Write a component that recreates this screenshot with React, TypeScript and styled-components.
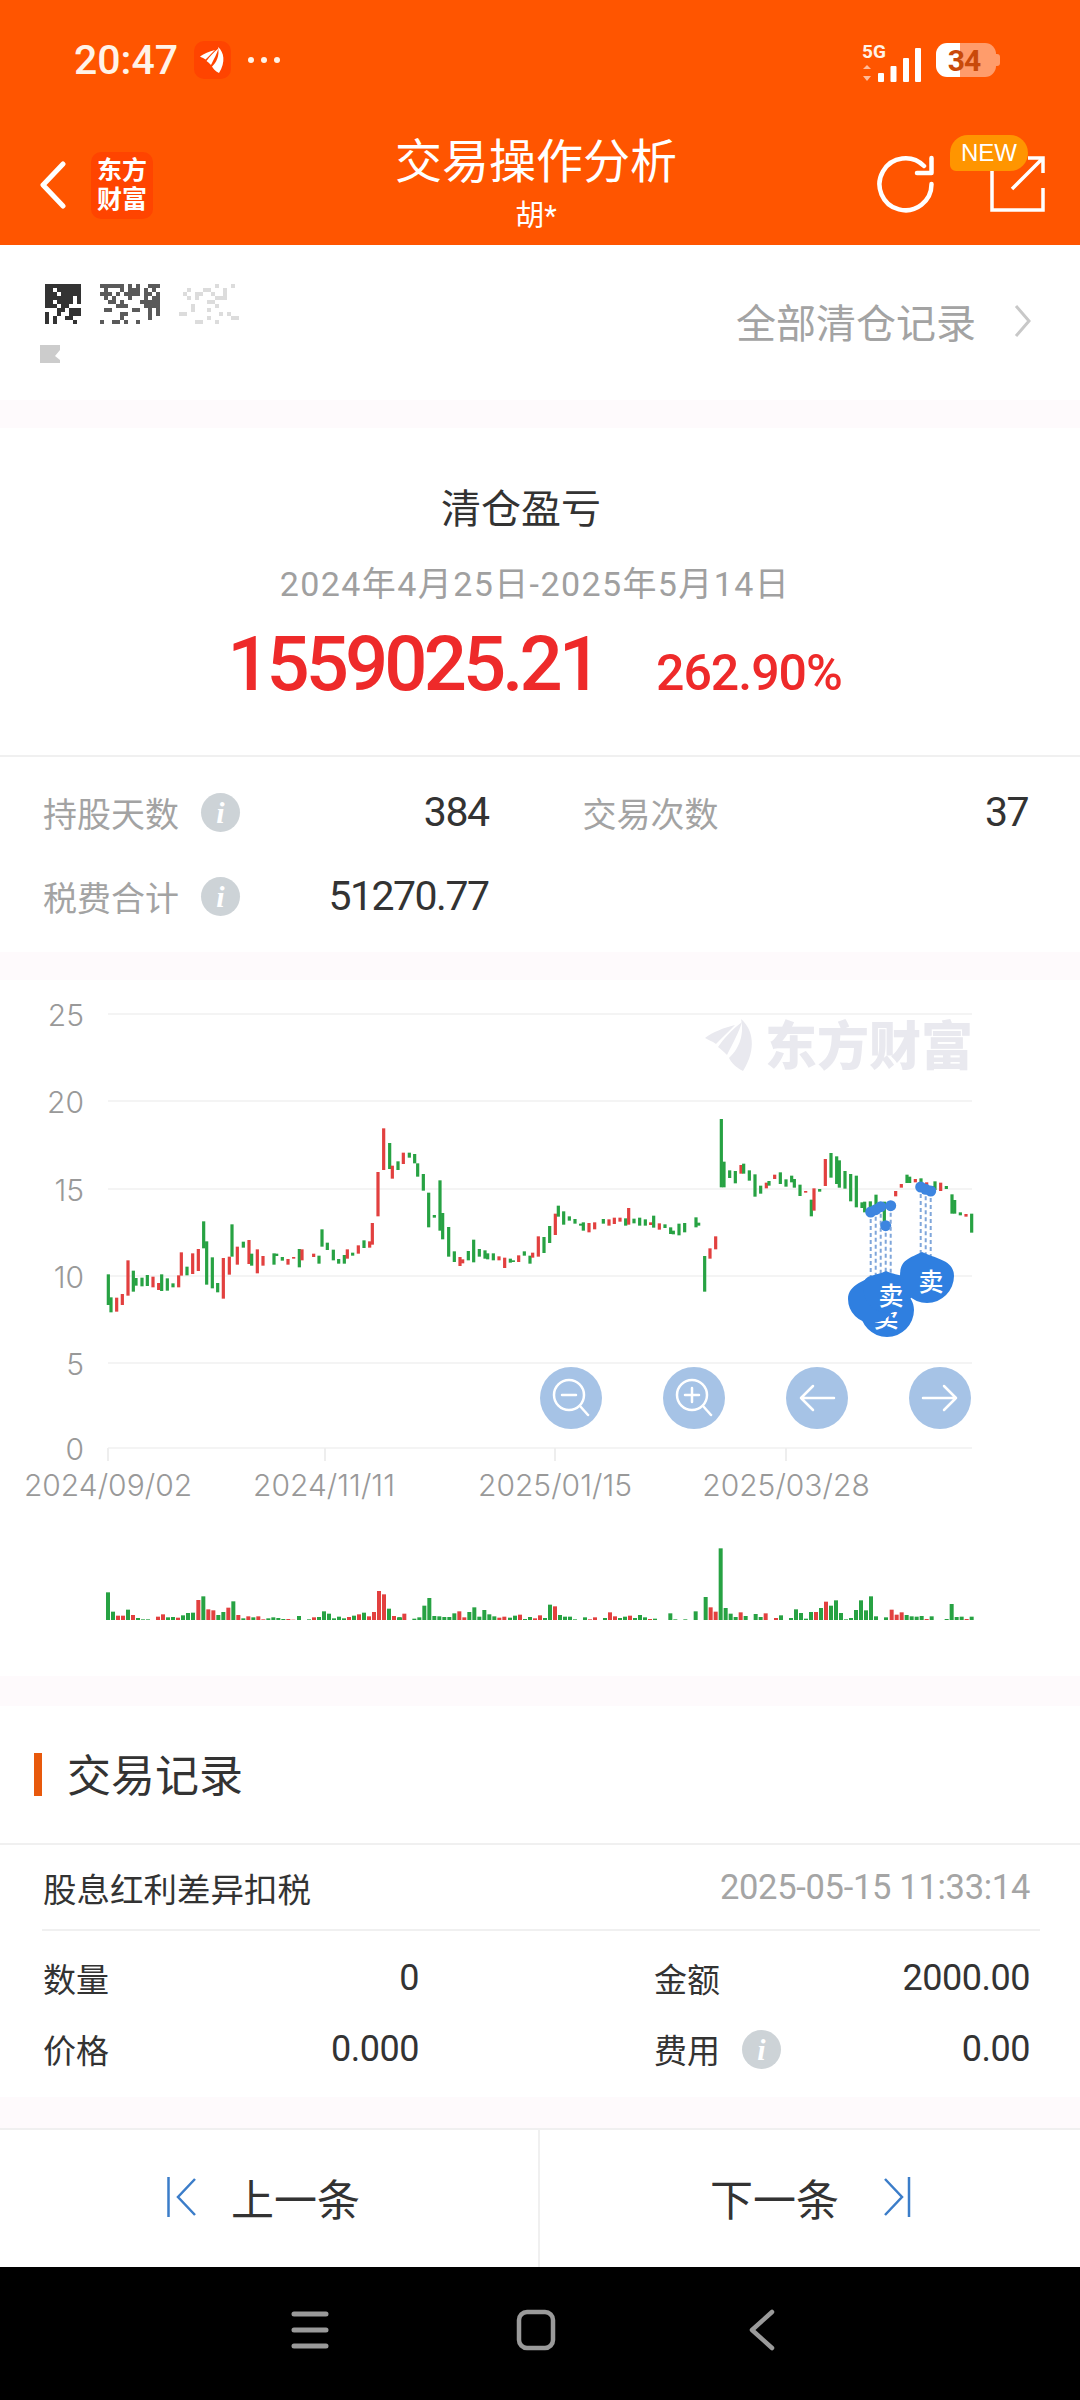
import React from 'react';
import styled, { createGlobalStyle } from 'styled-components';

const GlobalStyle = createGlobalStyle`
  html, body { margin: 0; padding: 0; background: #fff; }
  * { box-sizing: border-box; }
`;

const CJK = `Roboto, "Noto Sans CJK SC", sans-serif`;

const Page = styled.div`
  width: 1080px;
  height: 2400px;
  overflow: hidden;
  display: flex;
  flex-direction: column;
  background: #fff;
  font-family: ${CJK};
  color: #333;
`;

const Header = styled.header`
  height: 245px;
  background: #ff5500;
  color: #fff;
  display: flex;
  flex-direction: column;
`;

const StatusBar = styled.div`
  height: 120px;
  display: flex;
  align-items: center;
  padding: 0 84px 0 74px;
`;

const Clock = styled.span`
  font-size: 41px;
  font-weight: 500;
  color: #fff3e8;
`;

const AppMark = styled.span`
  width: 37px;
  height: 38px;
  margin-left: 16px;
  border-radius: 10px;
  background: #ff4400;
  display: flex;
  align-items: center;
  justify-content: center;
`;

const Dots = styled.span`
  display: flex;
  gap: 7px;
  margin-left: 17px;
`;

const Dot = styled.i`
  width: 6px;
  height: 6px;
  border-radius: 50%;
  background: #fff3e8;
`;

const StatusRight = styled.div`
  margin-left: auto;
  display: flex;
  align-items: center;
  gap: 14px;
`;

const Battery = styled.div`
  position: relative;
  width: 60px;
  height: 34px;
  border-radius: 11px;
  background: linear-gradient(90deg, #fff 0 40%, rgba(255, 255, 255, 0.42) 40%);
  color: #c94a0a;
  font-size: 30px;
  font-weight: 700;
  letter-spacing: -1px;
  display: flex;
  align-items: center;
  justify-content: center;
  padding-right: 4px;
  &::after {
    content: '';
    position: absolute;
    right: -4px;
    top: 11px;
    width: 4px;
    height: 12px;
    border-radius: 0 3px 3px 0;
    background: rgba(255, 255, 255, 0.42);
  }
`;

const NavBar = styled.div`
  height: 125px;
  display: grid;
  grid-template-columns: 1fr auto 1fr;
  padding: 0 35px 0 27px;
`;

const NavLeft = styled.div`
  display: flex;
  align-items: center;
  margin-top: 5px;
  margin-left: 13px;
  gap: 25px;
`;

const BrandTile = styled.span`
  width: 62px;
  height: 67px;
  border-radius: 10px;
  background: #ff4400;
  font-size: 25px;
  line-height: 29px;
  font-weight: 700;
  text-align: center;
  display: flex;
  align-items: center;
  justify-content: center;
`;

const NavTitle = styled.div`
  padding-top: 17px;
  text-align: center;
`;

const TitleText = styled.div`
  font-size: 47px;
  line-height: 50px;
  font-weight: 400;
`;

const SubTitle = styled.div`
  margin-top: 11px;
  font-size: 29px;
  line-height: 36px;
`;

const NavRight = styled.div`
  position: relative;
  display: flex;
  align-items: center;
  justify-content: flex-end;
  gap: 55px;
  margin-top: 3px;
`;

const NewBadge = styled.span`
  position: absolute;
  right: 17px;
  top: 12px;
  width: 78px;
  height: 36px;
  border-radius: 18px 18px 18px 6px;
  background: #ff9500;
  font-family: "Liberation Sans", sans-serif;
  font-size: 24px;
  line-height: 36px;
  text-align: center;
`;

const AccountRow = styled.section`
  height: 155px;
  display: flex;
  align-items: center;
  justify-content: space-between;
  padding: 0 49px 4px 40px;
`;

const AllLink = styled.div`
  display: flex;
  align-items: center;
  gap: 38px;
  font-size: 40px;
  color: #a3a3a3;
`;

const Strip = styled.div<{ $h: number }>`
  height: ${p => p.$h}px;
  background: #fefafc;
`;

const Summary = styled.section`
  height: 329px;
  border-bottom: 2px solid #f0f0f0;
  display: flex;
  flex-direction: column;
  align-items: center;
  padding-top: 57px;
`;

const SummaryTitle = styled.div`
  font-size: 40px;
  line-height: 50px;
  color: #333;
  margin-right: 38px;
`;

const DateRange = styled.div`
  margin-top: 29px;
  font-size: 34px;
  letter-spacing: 1.4px;
  line-height: 40px;
  color: #a0a0a0;
  margin-right: 10px;
`;

const Profit = styled.div`
  margin-top: 20px;
  display: flex;
  align-items: baseline;
  gap: 58px;
  color: #ee2a2a;
  margin-right: 11px;
  line-height: 80px;
`;

const ProfitAmount = styled.span`
  font-size: 76px;
  font-weight: 500;
  letter-spacing: -3.9px;
`;

const ProfitRate = styled.span`
  font-size: 50px;
  font-weight: 500;
  letter-spacing: -1px;
`;

const Stats = styled.section`
  height: 195px;
  display: grid;
  grid-template-columns: 1fr 1fr;
  grid-auto-rows: 40px;
  gap: 44px 94px;
  padding: 35px 52px 0 43px;
`;

const StatCell = styled.div`
  display: flex;
  align-items: center;
`;

const StatLabel = styled.span`
  font-size: 34px;
  color: #a3a3a3;
`;

const InfoBadge = styled.span<{ $gap: number }>`
  width: 39px;
  height: 39px;
  margin-left: ${p => p.$gap}px;
  border-radius: 50%;
  background: #cdd3d7;
  color: #fff;
  font-family: "Liberation Serif", serif;
  font-style: italic;
  font-weight: 700;
  font-size: 30px;
  line-height: 39px;
  text-align: center;
`;

const StatValue = styled.span`
  margin-left: auto;
  font-size: 41px;
  letter-spacing: -1.5px;
  color: #333;
`;

const ChartSection = styled.section`
  position: relative;
  height: 696px;
`;

const ChartSvg = styled.svg`
  display: block;
`;

const AxisText = styled.text`
  font-family: Inter, sans-serif;
  font-weight: 300;
  font-size: 30px;
  fill: #999;
`;

const Watermark = styled.text`
  font-family: "Noto Sans CJK SC", sans-serif;
  font-weight: 900;
  font-size: 52px;
  fill: #e9e9ef;
`;

const PinText = styled.text`
  font-family: "Noto Sans CJK SC", sans-serif;
  font-size: 25px;
  font-weight: 500;
  fill: #fff;
  text-anchor: middle;
`;

const ChartTools = styled.div`
  position: absolute;
  left: 540px;
  top: 387px;
  display: flex;
  gap: 61px;
`;

const ToolButton = styled.button`
  width: 62px;
  height: 62px;
  padding: 0;
  border: 0;
  border-radius: 50%;
  background: #a6c3e6;
  display: flex;
  align-items: center;
  justify-content: center;
`;

const Records = styled.section`
  height: 391px;
  display: flex;
  flex-direction: column;
`;

const RecordsHead = styled.div`
  height: 139px;
  border-bottom: 2px solid #f0f0f0;
  display: flex;
  align-items: center;
  padding: 0 0 4px 34px;
  font-size: 44px;
  color: #333;
  &::before {
    content: '';
    width: 8px;
    height: 43px;
    margin-right: 25px;
    margin-top: 4px;
    background: #e8590c;
  }
`;

const RecordTop = styled.div`
  height: 86px;
  margin: 0 40px 0 42px;
  border-bottom: 2px solid #f0f0f0;
  display: flex;
  align-items: center;
  justify-content: space-between;
  padding: 0 10px 0 1px;
  font-size: 33.5px;
`;

const RecordTime = styled.span`
  font-size: 34.5px;
  letter-spacing: -0.3px;
  color: #a5a5a5;
`;

const RecordGrid = styled.div`
  display: grid;
  grid-template-columns: 376px 376px;
  justify-content: space-between;
  grid-auto-rows: 40px;
  row-gap: 31px;
  padding: 27px 50px 0 43px;
`;

const RecordCell = styled.div`
  display: flex;
  align-items: center;
  font-size: 33px;
`;

const RecordValue = styled.span`
  margin-left: auto;
  font-size: 36px;
  letter-spacing: -0.5px;
`;

const Pager = styled.nav`
  height: 139px;
  border-top: 2px solid #f0f0f0;
  display: grid;
  grid-template-columns: 1fr 1fr;
`;

const PagerButton = styled.div<{ $prev?: boolean }>`
  display: flex;
  align-items: center;
  justify-content: center;
  gap: ${p => (p.$prev ? 34 : 44)}px;
  font-size: 43px;
  color: #333;
  padding: ${p => (p.$prev ? '0 11px 4px 0' : '0 0 4px 1px')};
  border-right: ${p => (p.$prev ? '2px solid #f0f0f0' : '0')};
`;

const SystemNav = styled.div`
  height: 133px;
  background: #000;
  display: grid;
  grid-template-columns: repeat(3, 226px);
  justify-content: center;
  align-items: center;
  justify-items: center;
  padding: 0 8px 8px 0;
`;

type Candle = [number, number, number, 'g' | 'r'];

const C1: Candle[] = [[25,493,585,'g'],[33,562,607,'g'],[50,563,605,'r'],[67,552,585,'r'],[84,451,557,'r'],[100,482,545,'g'],[108,504,527,'g'],[126,503,529,'g'],[142,495,528,'g'],[159,500,532,'r'],[176,519,540,'r'],[185,493,543,'g'],[202,505,542,'g'],[219,520,532,'g'],[236,496,532,'r'],[244,427,497,'r'],[261,470,496,'g'],[278,430,492,'r'],[295,417,483,'r'],[311,334,415,'g'],[320,394,524,'g'],[337,442,535,'g'],[353,519,547,'g'],[370,444,566,'r'],[388,440,494,'r'],[396,343,440,'g'],[412,410,464,'r'],[430,395,413,'g'],[447,390,462,'r'],[455,431,467,'g'],[472,418,490,'r'],[489,438,467,'r'],[522,430,464,'g'],[530,431,438,'g'],[547,441,452,'g'],[564,447,464,'r'],[581,441,446,'r'],[598,417,472,'g'],[606,418,451,'r'],[641,431,441,'r'],[657,437,461,'g'],[666,358,410,'g'],[682,398,420,'g'],[700,419,451,'g'],[716,447,461,'g'],[733,435,461,'g'],[742,418,446,'r'],[758,428,437,'g'],[775,406,431,'r'],[792,391,414,'g'],[809,394,413,'r'],[817,339,404,'r'],[834,186,319,'r'],[851,55,180,'r'],[869,99,177,'g'],[877,167,206,'r'],[894,154,180,'g']];
const C2: Candle[] = [[10,128,162,'r'],[28,128,143,'g'],[44,132,160,'g'],[53,160,200,'g'],[70,192,242,'g'],[86,248,352,'g'],[103,315,323,'g'],[120,211,362,'g'],[128,309,388,'g'],[146,351,440,'g'],[163,424,456,'g'],[180,441,468,'r'],[188,448,460,'r'],[205,423,451,'g'],[221,389,457,'g'],[238,417,440,'g'],[255,421,446,'g'],[263,430,448,'g'],[280,430,451,'g'],[297,439,451,'r'],[314,443,474,'r'],[331,446,458,'g'],[340,451,456,'g'],[356,436,456,'r'],[373,424,437,'g'],[390,437,461,'g'],[398,428,443,'r'],[415,379,440,'r'],[432,381,429,'g'],[449,348,399,'g'],[466,311,375,'r'],[475,287,320,'g'],[491,304,344,'g'],[508,319,332,'g'],[525,327,341,'g'],[542,341,347,'g'],[550,337,362,'g'],[567,339,367,'r'],[584,337,358,'r'],[610,327,341,'g'],[627,328,347,'r'],[643,323,342,'r'],[660,323,335,'r'],[677,325,347,'g'],[686,294,344,'r'],[702,326,340,'g'],[719,323,347,'g'],[736,328,347,'g'],[752,337,345,'r'],[761,317,353,'g'],[778,340,359,'r'],[795,343,354,'g'],[812,352,372,'g'],[820,362,373,'g'],[837,341,376,'g'],[854,339,367,'g'],[888,322,352,'g'],[896,338,347,'g']];
const C3: Candle[] = [[14,438,545,'g'],[30,415,446,'r'],[47,379,418,'r'],[64,27,232,'g'],[72,155,232,'g'],[89,181,204,'g'],[106,183,220,'g'],[123,165,191,'r'],[131,161,191,'g'],[148,181,212,'g'],[165,193,260,'g'],[182,227,251,'g'],[199,218,235,'r'],[207,213,227,'g'],[224,194,207,'r'],[241,187,222,'g'],[258,208,230,'g'],[275,197,217,'g'],[283,207,233,'g'],[300,224,258,'g'],[317,243,248,'r'],[334,269,319,'g'],[342,235,302,'r'],[359,237,245,'g'],[376,147,228,'r'],[393,129,203,'g'],[410,139,222,'g'],[418,151,233,'g'],[435,183,236,'g'],[452,192,274,'g'],[469,197,292,'g'],[486,277,294,'g'],[494,275,307,'g'],[511,274,310,'g'],[528,254,294,'g'],[545,276,295,'g'],[553,275,336,'g'],[570,275,285,'r'],[587,243,259,'r'],[604,222,233,'r'],[621,194,219,'g'],[629,200,219,'g'],[646,207,217,'r'],[663,205,222,'g'],[680,217,232,'r'],[697,228,240,'g'],[705,214,240,'g'],[722,218,243,'r'],[739,228,237,'g'],[756,253,311,'g'],[764,270,311,'g'],[781,307,316,'g'],[798,312,320,'r'],[815,311,368,'g']];

type Vol = [number, number, 'g' | 'r'];
const V1: Vol[] = [[24,157,'g'],[39,215,'g'],[54,227,'r'],[69,227,'r'],[84,209,'g'],[99,225,'r'],[114,234,'g'],[129,238,'g'],[144,238,'g'],[174,230,'r'],[189,223,'r'],[204,232,'g'],[219,231,'g'],[234,233,'r'],[249,226,'g'],[264,219,'g'],[279,218,'g'],[295,180,'r'],[310,169,'g'],[325,208,'r'],[340,211,'r'],[355,225,'g'],[370,216,'g'],[385,203,'r'],[400,184,'g'],[415,225,'r'],[430,235,'g'],[445,229,'r'],[460,232,'g'],[475,229,'r'],[490,238,'r'],[505,235,'g'],[520,232,'g'],[535,234,'g'],[550,237,'g'],[565,237,'r'],[580,239,'r'],[597,228,'g'],[627,238,'g'],[642,232,'r'],[657,231,'g'],[672,214,'g'],[687,221,'g'],[702,235,'g'],[717,230,'g'],[732,235,'g'],[747,231,'r'],[762,227,'g'],[777,223,'r'],[792,218,'g'],[807,229,'r'],[822,216,'r'],[837,153,'r'],[852,163,'r'],[867,206,'g'],[882,228,'r'],[897,232,'g']];
const V2: Vol[] = [[0,232,'g'],[13,221,'r'],[43,236,'g'],[58,232,'g'],[73,197,'g'],[88,174,'g'],[103,228,'g'],[118,229,'g'],[133,231,'g'],[148,231,'g'],[163,220,'g'],[178,214,'r'],[193,232,'r'],[208,216,'g'],[223,202,'g'],[238,230,'g'],[253,210,'g'],[268,223,'g'],[283,229,'g'],[298,233,'r'],[313,230,'r'],[330,233,'g'],[345,227,'g'],[360,224,'r'],[375,237,'g'],[390,231,'g'],[405,235,'r'],[420,226,'r'],[435,234,'g'],[450,194,'g'],[465,199,'r'],[480,225,'g'],[495,230,'g'],[510,230,'g'],[525,238,'g'],[555,232,'g'],[570,238,'r'],[585,232,'r'],[615,234,'g'],[630,217,'r'],[645,229,'r'],[660,234,'g'],[675,230,'g'],[690,227,'r'],[705,234,'g'],[720,225,'g'],[735,232,'g'],[750,237,'r'],[765,236,'g'],[811,220,'g'],[826,238,'g'],[856,238,'g'],[887,214,'g']];
const V3: Vol[] = [[17,171,'g'],[32,202,'r'],[47,215,'r'],[62,25,'g'],[77,204,'g'],[92,221,'g'],[107,231,'g'],[122,217,'r'],[137,228,'g'],[167,222,'g'],[182,231,'g'],[197,220,'r'],[228,234,'r'],[243,226,'g'],[273,234,'g'],[288,208,'g'],[303,219,'g'],[318,236,'g'],[333,216,'g'],[348,216,'r'],[363,204,'g'],[378,185,'r'],[393,197,'g'],[408,181,'g'],[423,219,'g'],[438,238,'g'],[453,234,'g'],[468,210,'g'],[483,181,'g'],[498,211,'g'],[513,169,'g'],[528,229,'g'],[558,232,'g'],[575,209,'r'],[590,224,'r'],[605,217,'r'],[620,225,'g'],[635,229,'g'],[650,230,'g'],[665,228,'g'],[680,237,'r'],[695,229,'g'],[740,237,'g'],[755,192,'g'],[770,231,'g'],[785,230,'g'],[800,237,'r'],[815,230,'g']];

const COLOR = { g: '#27a243', r: '#e2403f' };
const GRID = [1014, 1101, 1189, 1276, 1363, 1448];
const Y_LABELS = ['25', '20', '15', '10', '5', '0'];
const TICKS = [108, 325, 555, 786];
const DATES: [string, number][] = [['2024/09/02', 108], ['2024/11/11', 324], ['2025/01/15', 555], ['2025/03/28', 786]];
const SELL_DOTS: [number, number, number][] = [
  [870.7, 1212, 1280], [875.7, 1209.7, 1280], [880.7, 1206.7, 1280], [885.7, 1225.7, 1280], [890.7, 1205.7, 1280],
  [920.7, 1187, 1256], [925.7, 1189.3, 1256], [930.7, 1191, 1256],
];

const pin = (tx: number, ty: number, cx: number, cy: number, r: number) =>
  `M${tx} ${ty}C${tx + r * 0.5} ${ty + r * 0.25} ${cx + r} ${cy - r * 0.6} ${cx + r} ${cy}A${r} ${r} 0 1 1 ${cx - r} ${cy}C${cx - r} ${cy - r * 0.6} ${tx - r * 0.5} ${ty + r * 0.25} ${tx} ${ty}Z`;

const PIN_BLUE = '#2f7fe0';

const LogoMark: React.FC<{ x?: number; y?: number; s?: number; fill: string }> = ({ x = 0, y = 0, s = 1, fill }) => (
  <g transform={`translate(${x} ${y}) scale(${s})`} fill={fill}>
    <path d="M0 19C8 13 18 9 30 6C24 12 17 19 11 25C7 22 3 21 0 19Z" />
    <path d="M13 28C19 19 28 10 37 3C34 13 28 24 22 36C19 33 16 30 13 28Z" />
    <path d="M36 0C48 10 52 30 38 52C30 48 26 43 24 39C32 32 40 18 36 0Z" />
  </g>
);

const CandleChart = () => {
  const rows: [Candle[], number][] = [[C1, 100], [C2, 400], [C3, 700]];
  const vols: [Vol[], number][] = [[V1, 100], [V2, 400], [V3, 700]];
  return (
    <ChartSvg width={1080} height={696} viewBox="0 980 1080 696">
      {GRID.map(y => <rect key={y} x={108} y={y - 1} width={864} height={2} fill="#f4f4f4" />)}
      {TICKS.map(x => <rect key={x} x={x - 1} y={1448} width={2} height={13} fill="#eee" />)}
      {GRID.map((y, i) => <AxisText key={y} x={84} y={y + 12} textAnchor="end">{Y_LABELS[i]}</AxisText>)}
      {DATES.map(([d, x]) => <AxisText key={d} x={x} y={1496} textAnchor="middle">{d}</AxisText>)}
      <LogoMark x={705} y={1019} s={1} fill="#e9e9ef" />
      <Watermark x={765} y={1065}>东方财富</Watermark>
      {rows.map(([list, off]) => list.map(([x, t, b, c], i) => (
        <rect key={`${off}-${i}`} x={off + x / 3 - 1.6} y={1110 + t / 3} width={3.2} height={(b - t) / 3} fill={COLOR[c]} />
      )))}
      {vols.map(([list, off]) => list.map(([x, t, c], i) => (
        <rect key={`v${off}-${i}`} x={off + x / 3 - 2} y={1540 + t / 3} width={4} height={(240 - t) / 3} fill={COLOR[c]} />
      )))}
      {SELL_DOTS.map(([x, y, e]) => (
        <g key={`${x}`}>
          <line x1={x} y1={y} x2={x} y2={e} stroke="#7fa6da" strokeWidth={2} strokeDasharray="4 3" />
          <circle cx={x} cy={y} r={5.5} fill="#3d85e0" />
        </g>
      ))}
      <path d={pin(886, 1284, 887, 1310, 27)} fill={PIN_BLUE} />
      <PinText x={886} y={1327}>卖</PinText>
      <path d={pin(878, 1274, 872, 1299, 24)} fill={PIN_BLUE} />
      <path d={pin(886, 1271, 888, 1288, 25)} fill={PIN_BLUE} />
      <PinText x={891} y={1305}>卖</PinText>
      <path d={pin(922, 1252, 927, 1276, 27)} fill={PIN_BLUE} />
      <PinText x={931} y={1291}>卖</PinText>
    </ChartSvg>
  );
};

const speckle = (x0: number, w: number, density: number, seed: number) => {
  const cells: [number, number][] = [];
  let s = seed;
  for (let y = 0; y < 40; y += 4) {
    for (let x = 0; x < w; x += 4) {
      s = (s * 9301 + 49297) % 233280;
      if (s / 233280 < density * (1 - y / 70)) cells.push([x0 + x, y]);
    }
  }
  return cells;
};

const REDACT: [string, [number, number][]][] = [
  ['#333', speckle(5, 36, 0.95, 17)],
  ['#5a5a5a', speckle(60, 60, 0.6, 71)],
  ['#dcdcdc', speckle(139, 59, 0.3, 133)],
];

const Redacted = () => (
  <svg width={200} height={84} viewBox="0 -5 200 84">
    {REDACT.map(([fill, cells]) => cells.map(([x, y]) => (
      <rect key={`${fill}${x}-${y}`} x={x} y={y} width={4} height={4} fill={fill} />
    )))}
    <path d="M0 61H20V66L15 72L20 76V81H0Z" fill="#ccc" />
  </svg>
);

const PrevIcon = () => (
  <svg width={30} height={40} viewBox="0 0 30 40" fill="none" stroke="#3b7dc9" strokeWidth={2.5}>
    <path d="M1.5 0V40" />
    <path d="M28 2L11 20L28 38" />
  </svg>
);

const NextIcon = () => (
  <svg width={28} height={40} viewBox="0 0 28 40" fill="none" stroke="#3b7dc9" strokeWidth={2.5}>
    <path d="M26 0V40" />
    <path d="M2 2L19 20L2 38" />
  </svg>
);

const ToolIcon: React.FC<{ kind: 'minus' | 'plus' | 'left' | 'right' }> = ({ kind }) => (
  <svg width={40} height={40} viewBox="0 0 40 40" fill="none" stroke="#fff" strokeWidth={2.5} strokeLinecap="round" strokeLinejoin="round">
    {(kind === 'minus' || kind === 'plus') && (
      <>
        <circle cx={18} cy={17} r={15} />
        <path d="M29 28L37 37" />
        <path d="M11 17H25" />
        {kind === 'plus' && <path d="M18 10V24" />}
      </>
    )}
    {kind === 'left' && <path d="M37 20H4M16 8L4 20L16 32" />}
    {kind === 'right' && <path d="M3 20H36M24 8L36 20L24 32" />}
  </svg>
);

export default function App() {
  return (
    <Page>
      <GlobalStyle />
      <Header>
        <StatusBar>
          <Clock>20:47</Clock>
          <AppMark>
            <svg width={26} height={26} viewBox="0 0 52 52"><LogoMark fill="#fff" /></svg>
          </AppMark>
          <Dots><Dot /><Dot /><Dot /></Dots>
          <StatusRight>
            <svg width={60} height={46} viewBox="0 -6 60 46" fill="#fff">
              <text x={0} y={15} fontFamily="Roboto, sans-serif" fontSize={19} fontWeight={700} fill="#fff3e8">5G</text>
              <path d="M5 22L9 26H1ZM5 38L1 33H9Z" opacity={0.6} />
              <rect x={16} y={30} width={6} height={9} rx={1} />
              <rect x={28.5} y={23} width={6} height={16} rx={1} />
              <rect x={41} y={15} width={6} height={24} rx={1} />
              <rect x={53} y={5} width={6} height={34} rx={1} />
            </svg>
            <Battery>34</Battery>
          </StatusRight>
        </StatusBar>
        <NavBar>
          <NavLeft>
            <svg width={26} height={48} viewBox="0 0 26 48" fill="none" stroke="#fff" strokeWidth={5} strokeLinecap="round" strokeLinejoin="round">
              <path d="M23 3L3 24L23 45" />
            </svg>
            <BrandTile>东方<br />财富</BrandTile>
          </NavLeft>
          <NavTitle>
            <TitleText>交易操作分析</TitleText>
            <SubTitle>胡*</SubTitle>
          </NavTitle>
          <NavRight>
            <svg width={58} height={58} viewBox="0 0 58 58" fill="none" stroke="#fff" strokeWidth={4.5} strokeLinecap="round">
              <path d="M47 11A26 26 0 1 0 54.5 29" />
              <path d="M54.5 3V18H40" strokeLinejoin="round" />
            </svg>
            <svg width={55} height={58} viewBox="0 0 55 58" fill="none" stroke="#fff" strokeWidth={3.5}>
              <path d="M2 14V55H53V33" />
              <path d="M22 34L53 3M38 3H53V18" />
            </svg>
            <NewBadge>NEW</NewBadge>
          </NavRight>
        </NavBar>
      </Header>

      <AccountRow>
        <Redacted />
        <AllLink>
          全部清仓记录
          <svg width={17} height={34} viewBox="0 0 17 34" fill="none" stroke="#c8c8c8" strokeWidth={3}>
            <path d="M2 2L15 17L2 32" />
          </svg>
        </AllLink>
      </AccountRow>
      <Strip $h={28} />

      <Summary>
        <SummaryTitle>清仓盈亏</SummaryTitle>
        <DateRange>2024年4月25日-2025年5月14日</DateRange>
        <Profit>
          <ProfitAmount>1559025.21</ProfitAmount>
          <ProfitRate>262.90%</ProfitRate>
        </Profit>
      </Summary>

      <Stats>
        <StatCell>
          <StatLabel>持股天数</StatLabel>
          <InfoBadge $gap={22}>i</InfoBadge>
          <StatValue>384</StatValue>
        </StatCell>
        <StatCell>
          <StatLabel>交易次数</StatLabel>
          <StatValue>37</StatValue>
        </StatCell>
        <StatCell>
          <StatLabel>税费合计</StatLabel>
          <InfoBadge $gap={22}>i</InfoBadge>
          <StatValue>51270.77</StatValue>
        </StatCell>
      </Stats>
      <Strip $h={28} />

      <ChartSection>
        <CandleChart />
        <ChartTools>
          <ToolButton><ToolIcon kind="minus" /></ToolButton>
          <ToolButton><ToolIcon kind="plus" /></ToolButton>
          <ToolButton><ToolIcon kind="left" /></ToolButton>
          <ToolButton><ToolIcon kind="right" /></ToolButton>
        </ChartTools>
      </ChartSection>
      <Strip $h={30} />

      <Records>
        <RecordsHead>交易记录</RecordsHead>
        <RecordTop>
          <span>股息红利差异扣税</span>
          <RecordTime>2025-05-15 11:33:14</RecordTime>
        </RecordTop>
        <RecordGrid>
          <RecordCell>数量<RecordValue>0</RecordValue></RecordCell>
          <RecordCell>金额<RecordValue>2000.00</RecordValue></RecordCell>
          <RecordCell>价格<RecordValue>0.000</RecordValue></RecordCell>
          <RecordCell>费用<InfoBadge $gap={22}>i</InfoBadge><RecordValue>0.00</RecordValue></RecordCell>
        </RecordGrid>
      </Records>
      <Strip $h={31} />

      <Pager>
        <PagerButton $prev><PrevIcon />上一条</PagerButton>
        <PagerButton>下一条<NextIcon /></PagerButton>
      </Pager>

      <SystemNav>
        <svg width={38} height={38} viewBox="0 0 38 38" fill="none" stroke="#9a9a9a" strokeWidth={5} strokeLinecap="round">
          <path d="M3 3H35M3 19H35M3 35H35" />
        </svg>
        <svg width={40} height={42} viewBox="0 0 40 42" fill="none" stroke="#9a9a9a" strokeWidth={4.5}>
          <rect x={3} y={3} width={34} height={36} rx={8} />
        </svg>
        <svg width={26} height={42} viewBox="0 0 26 42" fill="none" stroke="#9a9a9a" strokeWidth={4.5} strokeLinecap="round" strokeLinejoin="round">
          <path d="M23 3L3 21L23 39" />
        </svg>
      </SystemNav>
    </Page>
  );
}
